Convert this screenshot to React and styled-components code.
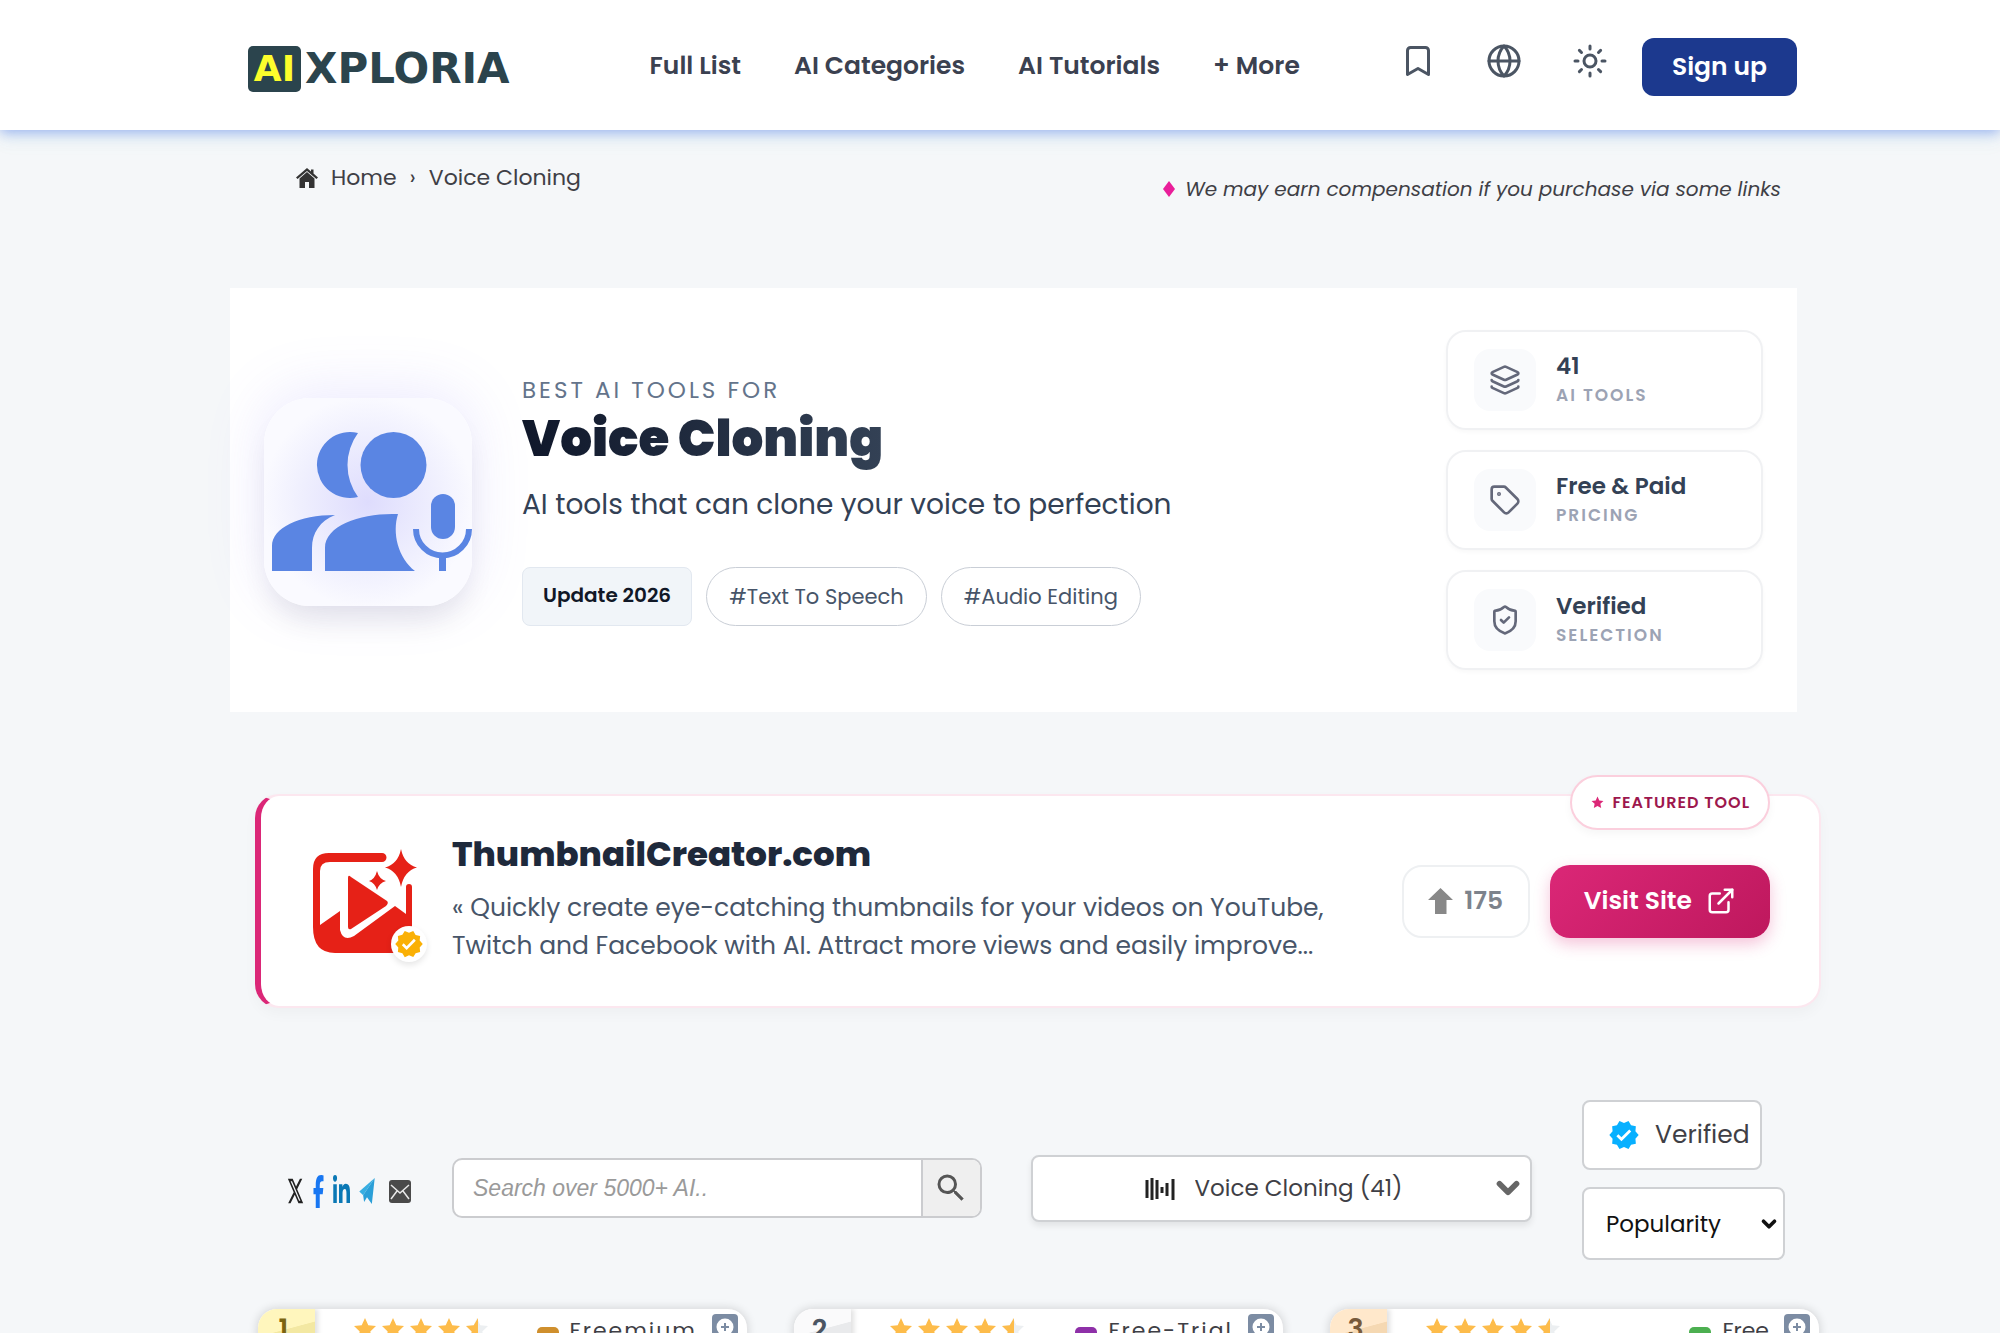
import React, { useState } from 'react';
import styled, { createGlobalStyle } from 'styled-components';
import { Bookmark, Globe, Sun, Layers, Tag, ShieldCheck, ExternalLink, ChevronDown } from 'lucide-react';
import { FaXTwitter, FaFacebookF, FaLinkedinIn } from 'react-icons/fa6';
import { MdVerified, MdSearch } from 'react-icons/md';

const GlobalStyle = createGlobalStyle`
  * {
    box-sizing: border-box;
  }

  body {
    margin: 0;
    background: #f5f7f9;
    color: #3f3f46;
    font-family: 'Poppins', 'Inter', sans-serif;
  }

  a {
    color: inherit;
    text-decoration: none;
  }

  button, input, select {
    font-family: inherit;
    color: inherit;
  }

  h1, h2, p, ul, ol {
    margin: 0;
    padding: 0;
  }

  ul, ol {
    list-style: none;
  }
`

const Page = styled.div`
  height: 100vh;
  overflow: hidden;
`

const Header = styled.header`
  display: flex;
  align-items: center;
  height: 130px;
  padding: 0 203px 0 248px;
  background: #fff;
  position: relative;
  box-shadow: 0 3px 12px rgba(80, 120, 235, 0.5), 0 8px 20px rgba(80, 200, 190, 0.08);
`

const Logo = styled.a`
  display: flex;
  align-items: center;
  gap: 4px;
  padding-top: 7px;
  font-family: 'DejaVu Sans', sans-serif;
  font-weight: 700;
  font-size: 42px;
  line-height: 46px;
  color: #2b444d;
`

const LogoMark = styled.span`
  width: 53px;
  height: 46px;
  border-radius: 5px;
  background: #2b444d;
  color: #fdfd2c;
  font-size: 36px;
  text-align: center;
`

const Nav = styled.nav`
  display: flex;
  gap: 53px;
  margin-left: 140px;
  padding-top: 2px;
  font-size: 25px;
  font-weight: 600;
  color: #3b4150;
  white-space: nowrap;
`

const HeaderActions = styled.div`
  display: flex;
  align-items: center;
  gap: 50px;
  margin-left: auto;
  padding-right: 34px;
`

const IconButton = styled.button`
  display: flex;
  padding: 0 0 8px;
  border: 0;
  background: none;
  color: #4b5563;
  cursor: pointer;
`

const SignUp = styled.a`
  margin-top: 4px;
  padding: 14px 30px;
  border-radius: 12px;
  background: #1c398e;
  color: #fff;
  font-size: 25px;
  font-weight: 600;
  line-height: 30px;
  white-space: nowrap;
`

const Main = styled.main`
  padding: 0 179px 0 255px;
`

const TopRow = styled.div`
  display: flex;
  justify-content: space-between;
  min-height: 158px;
  padding: 32px 40px 0 41px;
`

const Breadcrumb = styled.ol`
  display: flex;
  height: 32px;
  align-items: center;
  gap: 13px;
  font-size: 22px;
  line-height: 30px;

  svg {
    display: block;
  }
`

const Disclosure = styled.p`
  display: flex;
  align-items: center;
  gap: 10px;
  height: 54px;
  font-size: 20px;
  font-style: italic;
`

const Hero = styled.section`
  display: flex;
  align-items: center;
  margin: 0 24px 0 -25px;
  padding: 42px 34px;
  background: #fff;
`

const HeroIcon = styled.div`
  flex: none;
  width: 208px;
  height: 208px;
  margin-top: 4px;
  border-radius: 46px;
  background: radial-gradient(circle, #dedcfd 0%, #f0f0fe 48%, #fafaff 72%);
  box-shadow: 0 20px 30px -8px rgba(15, 23, 42, 0.1), 0 -6px 60px rgba(129, 120, 248, 0.16);

  svg {
    display: block;
  }
`

const HeroText = styled.div`
  flex: 1;
  padding: 0 0 3px 50px;
`

const Kicker = styled.p`
  font-size: 23px;
  line-height: 36px;
  letter-spacing: 3px;
  color: #64748b;
`

const Title = styled.h1`
  font-size: 50px;
  font-weight: 900;
  line-height: 62px;
  background: linear-gradient(90deg, #0f172a, #334155);
  background-clip: text;
  color: transparent;
  width: fit-content;
`

const Lead = styled.p`
  margin-top: 15px;
  font-size: 28px;
  line-height: 40px;
  color: #334155;
`

const Tags = styled.div`
  display: flex;
  gap: 14px;
  margin-top: 42px;
`

const TagPill = styled.a`
  padding: 0 22px;
  border: 1px solid #c9ced6;
  border-radius: 30px;
  font-size: 21px;
  line-height: 57px;
  color: #475569;
`

const UpdateTag = styled.span`
  padding: 0 20px;
  border: 1px solid #e2e8f0;
  border-radius: 8px;
  background: #f1f5f9;
  font-size: 20px;
  font-weight: 600;
  line-height: 55px;
  color: #111827;
`

const Stats = styled.ul`
  display: grid;
  gap: 20px;
  width: 317px;
`

const Stat = styled.li`
  display: flex;
  align-items: center;
  gap: 20px;
  height: 100px;
  padding: 0 26px;
  border: 2px solid #f0f1f3;
  border-radius: 20px;
  box-shadow: 0 2px 4px rgba(0, 0, 0, 0.03);
`

const StatIcon = styled.span`
  display: grid;
  place-items: center;
  width: 62px;
  height: 62px;
  border-radius: 16px;
  background: #f9fafc;
  color: #64687a;
`

const StatValue = styled.p`
  font-size: 23px;
  font-weight: 600;
  line-height: 30px;
  color: #334155;
`

const StatLabel = styled.p`
  font-size: 17px;
  font-weight: 600;
  line-height: 28px;
  letter-spacing: 2px;
  text-transform: uppercase;
  color: #9ca3b4;
`

const Featured = styled.section`
  position: relative;
  display: flex;
  align-items: center;
  height: 214px;
  margin-top: 82px;
  padding: 0 49px 0 52px;
  border: 2px solid #fce7ef;
  border-left: 6px solid #db2777;
  border-radius: 24px;
  background: #fff;
  box-shadow: 0 6px 14px rgba(0, 0, 0, 0.03);
`

const FeaturedPill = styled.span`
  position: absolute;
  top: -21px;
  right: 49px;
  display: flex;
  align-items: center;
  gap: 8px;
  height: 55px;
  padding: 0 18px 0 19px;
  border: 2px solid #fbcfdd;
  border-radius: 28px;
  background: #fff;
  box-shadow: 0 4px 8px rgba(0, 0, 0, 0.04);
  font-size: 16px;
  font-weight: 600;
  letter-spacing: 1px;
  color: #9d174d;

  svg {
    color: #db2777;
  }
`

const ToolLogo = styled.div`
  position: relative;
  flex: none;
  width: 105px;
  height: 105px;

  > svg {
    display: block;
  }
`

const ToolBadge = styled.span`
  position: absolute;
  right: -9px;
  bottom: -8px;
  display: grid;
  place-items: center;
  width: 36px;
  height: 36px;
  border-radius: 50%;
  background: #fff;
  box-shadow: 0 3px 6px rgba(0, 0, 0, 0.1);
  color: #fab005;
`

const ToolText = styled.div`
  flex: 1;
  padding: 0 0 8px 34px;
`

const ToolName = styled.h2`
  font-size: 34px;
  font-weight: 800;
  line-height: 50px;
  color: #1e293b;
`

const ToolDescription = styled.p`
  margin-top: 10px;
  font-size: 25px;
  line-height: 38px;
  color: #475569;
`

const Votes = styled.button`
  display: flex;
  align-items: center;
  justify-content: center;
  gap: 11px;
  width: 128px;
  height: 73px;
  margin-right: 20px;
  border: 2px solid #eef0f2;
  border-radius: 20px;
  background: #fff;
  font-size: 25px;
  font-weight: 600;
  color: #7d838c;
  cursor: pointer;
`

const VisitLink = styled.a`
  display: flex;
  align-items: center;
  gap: 14px;
  height: 73px;
  padding: 0 34px;
  border-radius: 20px;
  background: linear-gradient(135deg, #db2777, #be185d);
  box-shadow: 0 6px 16px rgba(219, 39, 119, 0.28);
  font-size: 25px;
  font-weight: 600;
  white-space: nowrap;
  color: #fff;
`

const Filters = styled.div`
  display: flex;
  align-items: center;
  gap: 50px;
  margin-top: 92px;
  padding: 0 36px 0 32px;
`

const FilterMain = styled.div`
  flex: 1;
  display: grid;
  grid-template-columns: auto 578fr 501fr;
  align-items: center;
  padding-top: 16px;
`

const Share = styled.div`
  display: flex;
  align-items: center;
  gap: 9px;
  margin-right: 41px;
  padding-top: 6px;

  a:last-child {
    margin-left: 5px;
  }
`

const ShareLink = styled.a`
  display: block;
  color: ${props => props.$color};

  svg {
    display: block;
    width: ${props => props.$width}px;
    height: ${props => props.$height}px;
  }
`

const SearchForm = styled.form`
  display: flex;
  height: 60px;
  margin-right: 49px;
  border: 2px solid #cbcccf;
  border-radius: 10px;
  background: #fff;
  overflow: hidden;
`

const SearchInput = styled.input`
  flex: 1;
  min-width: 0;
  padding: 0 19px;
  border: 0;
  background: none;
  font-family: 'Liberation Sans', Arial, sans-serif;
  font-size: 23px;
  font-style: italic;

  &::placeholder {
    color: #9a9a9a;
    opacity: 1;
  }
`

const SearchButton = styled.button`
  display: grid;
  place-items: center;
  width: 59px;
  padding: 0;
  border: 0;
  border-left: 2px solid #cbcccf;
  background: #efefef;
  color: #555;
`

const CategoryField = styled.label`
  display: flex;
  align-items: center;
  height: 67px;
  padding: 0 5px 0 112px;
  border: 2px solid #cfd1d4;
  border-radius: 8px;
  background: #fff;
  box-shadow: 0 4px 6px rgba(0, 0, 0, 0.08);
`

const Select = styled.select`
  flex: 1;
  min-width: 0;
  padding: 0 0 0 ${props => props.$indent}px;
  border: 0;
  background: none;
  appearance: none;
  font-size: 23px;
  color: ${props => props.$color};
`

const SortColumn = styled.div`
  display: grid;
  justify-items: start;
  gap: 17px;
  width: 203px;
`

const VerifiedButton = styled.button`
  display: flex;
  align-items: center;
  gap: 15px;
  width: 180px;
  height: 70px;
  padding: 0 0 0 24px;
  border: 2px solid #cfd1d4;
  border-radius: 8px;
  background: #fff;
  font-size: 25px;

  svg {
    flex: none;
    color: #08b0ff;
  }
`

const SortField = styled.label`
  display: flex;
  align-items: center;
  width: 100%;
  height: 73px;
  padding: 0 3px 0 22px;
  border: 2px solid #cfd1d4;
  border-radius: 8px;
  background: #fff;
  color: #111;
`

const Grid = styled.div`
  display: grid;
  grid-template-columns: repeat(3, 1fr);
  gap: 45px;
  margin-top: 48px;
  padding: 0 1px 0 2px;
`

const Card = styled.article`
  display: flex;
  align-items: flex-start;
  height: 420px;
  border: 1px solid #e4e5e7;
  border-radius: 20px;
  background: #fff;
  box-shadow: 0 0 10px rgba(0, 0, 0, 0.14);
  overflow: hidden;
`

const Rank = styled.span`
  width: 57px;
  height: 57px;
  padding: 4px 6px 0 0;
  background: ${props => props.$background};
  box-shadow: 3px 0 5px rgba(0, 0, 0, 0.12);
  font-size: 27px;
  font-weight: 600;
  line-height: 32px;
  text-align: center;
  color: ${props => props.$color};
`

const Stars = styled.div`
  display: flex;
  gap: 4px;
  padding: 8px 0 0 38px;
`

const Pricing = styled.p`
  display: flex;
  align-items: center;
  gap: 11px;
  margin-left: auto;
  padding: 5px 15px 0 0;
  font-size: 22px;
  line-height: 34px;
  letter-spacing: ${props => props.$tracking}px;
  color: #3f3f46;
`

const Dot = styled.span`
  width: 22px;
  height: 16px;
  margin-top: 8px;
  border-radius: 5px;
  background: ${props => props.$color};
`

const SaveButton = styled.button`
  display: grid;
  place-items: center;
  width: 26px;
  height: 36px;
  margin: 5px 9px 0 0;
  padding: 0 0 10px;
  border: 0;
  border-radius: 4px;
  background: #7c8ca3;
`

const stats = [
  { icon: Layers, value: '41', label: 'AI Tools' },
  { icon: Tag, value: 'Free & Paid', label: 'Pricing' },
  { icon: ShieldCheck, value: 'Verified', label: 'Selection' },
];

const tools = [
  { rank: 1, pricing: 'Freemium', dot: '#cf8f2d', tracking: 2, color: '#7a6410', background: 'linear-gradient(165deg, #fff6bd 38%, #f3e8a2 39%)' },
  { rank: 2, pricing: 'Free-Trial', dot: '#8e30a8', tracking: 2, color: '#4b5563', background: 'linear-gradient(165deg, #fafafb 38%, #e9eaec 39%)' },
  { rank: 3, pricing: 'Free', dot: '#4caf50', tracking: 0, color: '#775a3b', background: 'linear-gradient(165deg, #ffe8cb 38%, #f5d8b2 39%)' },
];

const starPath = 'M12 1l3.3 7.2 7.7.9-5.7 5.3 1.5 7.7L12 18.3l-6.8 3.8 1.5-7.7L1 9.1l7.700-.9z';

const Star = ({ half }) => (
  <svg width="24" height="24" viewBox="0 0 24 24">
    <path d={starPath} fill={half ? '#eceff1' : '#fdbc4b'} />
    {half && <path d="M13 1v17.300l-7.800 3.800 1.500-7.700L1 9.100l7.700-.9z" fill="#fdbc4b" />}
  </svg>
);

const HomeIcon = () => (
  <svg width="22" height="20" viewBox="0 0 22 20" fill="#333">
    <path d="M11 0L0 9.500l1.600 1.500L11 3l9.400 8L22 9.500 17.500 5.500V1.500h-2.500v2z" />
    <path d="M11 4L3.500 10.500V20H9v-6h4v6h5.500v-9.500z" />
  </svg>
);

const VoiceCloningIcon = () => (
  <svg width="208" height="208" viewBox="0 0 208 208" fill="#5a85e3">
    <circle cx="129.500" cy="67" r="33" />
    <path d="M94 35A33 33 0 1 0 94 99A54 54 0 0 1 94 35z" />
    <path d="M8 173V148C8 130 35 117 71 117C56 123 48 135 48 150V173z" />
    <path d="M61 173V150C61 128 95 116 128 116H134C128 135 134 160 151 173z" />
    <rect x="167" y="96" width="24" height="45" rx="12" />
    <path d="M152 131A26.500 26.500 0 0 0 205 131" fill="none" stroke="#5a85e3" strokeWidth="6" />
    <path d="M175 157h7v16h-7z" />
  </svg>
);

const ThumbnailLogo = () => (
  <svg width="105" height="105" viewBox="0 0 105 105" fill="#e62117">
    <path d="M0 76V20Q0 4 16 4H69a4 4 0 0 1 0 9H17Q7 13 7 22V76L27 62V81Q30 93 41 87L82 57L93 65V38a3 3 0 0 1 6 0V104H22Q0 104 0 78z" />
    <path d="M35 29Q35 25 38 28L74 52Q76 54 73 57L38 80Q35 81 35 78z" />
    <path d="M88 0Q91 15 104 18.500Q91 22 88 38Q85 22 72 18.500Q85 15 88 0z" />
    <path d="M64 22Q66 30 73 32Q66 34 64 41Q62 34 56 32Q62 30 64 22z" />
  </svg>
);

const App = () => {
  const [search, setSearch] = useState('');

  return (
    <>
      <GlobalStyle />
      <Page>
        <Header>
          <Logo href="#">
            <LogoMark>AI</LogoMark>XPLORIA
          </Logo>
          <Nav>
            <a href="#list">Full List</a>
            <a href="#categories">AI Categories</a>
            <a href="#tutorials">AI Tutorials</a>
            <a href="#more">+ More</a>
          </Nav>
          <HeaderActions>
            <IconButton aria-label="Bookmarks"><Bookmark size={36} strokeWidth={2} /></IconButton>
            <IconButton aria-label="Language"><Globe size={36} strokeWidth={2} /></IconButton>
            <IconButton aria-label="Theme"><Sun size={36} strokeWidth={2} /></IconButton>
          </HeaderActions>
          <SignUp href="#signup">Sign up</SignUp>
        </Header>

        <Main>
          <TopRow>
            <Breadcrumb>
              <li><a href="#" aria-label="Start"><HomeIcon /></a></li>
              <li><a href="#">Home</a></li>
              <li>›</li>
              <li>Voice Cloning</li>
            </Breadcrumb>
            <Disclosure>
              <svg width="12" height="16" viewBox="0 0 12 16"><path d="M6 0l6 8-6 8-6-8z" fill="#e91e9a" /></svg>
              We may earn compensation if you purchase via some links
            </Disclosure>
          </TopRow>

          <Hero>
            <HeroIcon><VoiceCloningIcon /></HeroIcon>
            <HeroText>
              <Kicker>BEST AI TOOLS FOR</Kicker>
              <Title>Voice Cloning</Title>
              <Lead>AI tools that can clone your voice to perfection</Lead>
              <Tags>
                <UpdateTag>Update 2026</UpdateTag>
                <TagPill href="#tts">#Text To Speech</TagPill>
                <TagPill href="#audio">#Audio Editing</TagPill>
              </Tags>
            </HeroText>
            <Stats>
              {stats.map(({ icon: Icon, value, label }) => (
                <Stat key={label}>
                  <StatIcon><Icon size={32} strokeWidth={2} /></StatIcon>
                  <div>
                    <StatValue>{value}</StatValue>
                    <StatLabel>{label}</StatLabel>
                  </div>
                </Stat>
              ))}
            </Stats>
          </Hero>

          <Featured>
            <FeaturedPill>
              <svg width="13" height="13" viewBox="0 0 24 24" fill="currentColor"><path d={starPath} /></svg>
              FEATURED TOOL
            </FeaturedPill>
            <ToolLogo>
              <ThumbnailLogo />
              <ToolBadge><MdVerified size={30} /></ToolBadge>
            </ToolLogo>
            <ToolText>
              <ToolName>ThumbnailCreator.com</ToolName>
              <ToolDescription>
                « Quickly create eye-catching thumbnails for your videos on YouTube,<br />
                Twitch and Facebook with AI. Attract more views and easily improve...
              </ToolDescription>
            </ToolText>
            <Votes>
              <svg width="25" height="26" viewBox="0 0 25 26" fill="#888"><path d="M12.500 0L25 12H18.500V26H7V12H0z" /></svg>
              175
            </Votes>
            <VisitLink href="#visit">Visit Site <ExternalLink size={30} strokeWidth={2} /></VisitLink>
          </Featured>

          <Filters>
            <FilterMain>
              <Share>
                <ShareLink href="#x" aria-label="X" $width={17} $height={30} $color="#222">
                  <FaXTwitter preserveAspectRatio="none" />
                </ShareLink>
                <ShareLink href="#facebook" aria-label="Facebook" $width={11} $height={33} $color="#1877f2">
                  <FaFacebookF preserveAspectRatio="none" />
                </ShareLink>
                <ShareLink href="#linkedin" aria-label="LinkedIn" $width={17} $height={32} $color="#0a78b5">
                  <FaLinkedinIn preserveAspectRatio="none" />
                </ShareLink>
                <ShareLink href="#telegram" aria-label="Telegram" $width={16} $height={27}>
                  <svg viewBox="0 0 16 28"><path d="M16 0L0 14l4 4z" fill="#37aee2" /><path d="M16 0L4 18l1 7 3-5 5 7z" fill="#2a9fd8" /></svg>
                </ShareLink>
                <ShareLink href="#mail" aria-label="Email" $width={22} $height={23}>
                  <svg viewBox="0 0 22 23" fill="none" stroke="#e8e8e8" strokeWidth="1.500"><rect width="22" height="23" rx="3" fill="#4a4a4a" stroke="none" /><path d="M2 5l9 8 9-8M2 19l6-8M20 19l-6-8" /></svg>
                </ShareLink>
              </Share>
              <SearchForm onSubmit={e => e.preventDefault()}>
                <SearchInput
                  aria-label="Search"
                  placeholder="Search over 5000+ AI.."
                  value={search}
                  onChange={e => setSearch(e.target.value)}
                />
                <SearchButton aria-label="Search"><MdSearch size={36} /></SearchButton>
              </SearchForm>
              <CategoryField>
                <svg width="30" height="28" viewBox="0 0 30 28" stroke="#222" strokeWidth="3">
                  <path d="M2 6v18M7 4v22M12 6v19M17 13v6M22 9v13M28 5v21" />
                </svg>
                <Select aria-label="Category" $indent={20} $color="#3f3f46">
                  <option>Voice Cloning (41)</option>
                </Select>
                <ChevronDown size={34} strokeWidth={4} color="#666" />
              </CategoryField>
            </FilterMain>
            <SortColumn>
              <VerifiedButton><MdVerified size={32} />Verified</VerifiedButton>
              <SortField>
                <Select aria-label="Sort by" $indent={0} $color="#111">
                  <option>Popularity</option>
                </Select>
                <ChevronDown size={22} strokeWidth={4} />
              </SortField>
            </SortColumn>
          </Filters>

          <Grid>
            {tools.map(tool => (
              <Card key={tool.rank}>
                <Rank $background={tool.background} $color={tool.color}>{tool.rank}</Rank>
                <Stars>
                  <Star /><Star /><Star /><Star /><Star half />
                </Stars>
                <Pricing $tracking={tool.tracking}>
                  <Dot $color={tool.dot} />
                  {tool.pricing}
                </Pricing>
                <SaveButton aria-label="Save">
                  <svg width="18" height="18" viewBox="0 0 18 18"><circle cx="9" cy="9" r="8.500" fill="#fff" /><path d="M9 5v8M5 9h8" stroke="#7c8ca3" strokeWidth="2" /></svg>
                </SaveButton>
              </Card>
            ))}
          </Grid>
        </Main>
      </Page>
    </>
  );
};

export default App;
